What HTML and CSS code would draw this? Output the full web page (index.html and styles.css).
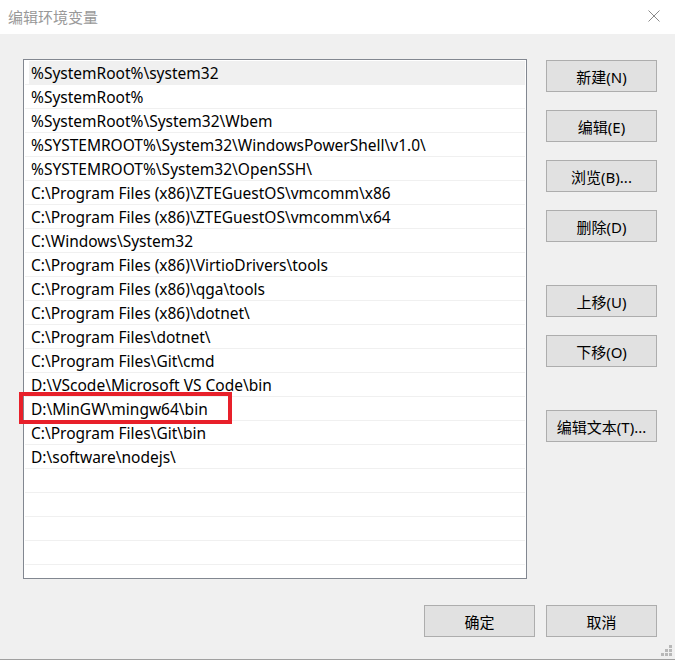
FILE: index.html
```html
<!DOCTYPE html>
<html lang="zh-CN">
<head>
    <meta charset="UTF-8">
    <title>编辑环境变量</title>
    <link rel="stylesheet" href="styles.css">
</head>
<body>

<div class="window">
    <div class="titlebar">
        <span class="title">编辑环境变量</span>
        <svg class="close" width="12" height="12" viewBox="0 0 12 12">
            <path d="M0.5 0.5 L11.5 11.5 M11.5 0.5 L0.5 11.5" stroke="#8a8a8a" stroke-width="1" fill="none"/>
        </svg>
    </div>

    <div class="main">
        <div class="list-wrap">
            <div class="list">
                <div class="row selected"><span>%SystemRoot%\system32</span></div>
                <div class="row"><span>%SystemRoot%</span></div>
                <div class="row"><span>%SystemRoot%\System32\Wbem</span></div>
                <div class="row"><span>%SYSTEMROOT%\System32\WindowsPowerShell\v1.0\</span></div>
                <div class="row"><span>%SYSTEMROOT%\System32\OpenSSH\</span></div>
                <div class="row"><span>C:\Program Files (x86)\ZTEGuestOS\vmcomm\x86</span></div>
                <div class="row"><span>C:\Program Files (x86)\ZTEGuestOS\vmcomm\x64</span></div>
                <div class="row"><span>C:\Windows\System32</span></div>
                <div class="row"><span>C:\Program Files (x86)\VirtioDrivers\tools</span></div>
                <div class="row"><span>C:\Program Files (x86)\qga\tools</span></div>
                <div class="row"><span>C:\Program Files (x86)\dotnet\</span></div>
                <div class="row"><span>C:\Program Files\dotnet\</span></div>
                <div class="row"><span>C:\Program Files\Git\cmd</span></div>
                <div class="row"><span>D:\VScode\Microsoft VS Code\bin</span></div>
                <div class="row"><span>D:\MinGW\mingw64\bin</span></div>
                <div class="row"><span>C:\Program Files\Git\bin</span></div>
                <div class="row"><span>D:\software\nodejs\</span></div>
                <div class="row"><span></span></div>
                <div class="row"><span></span></div>
                <div class="row"><span></span></div>
                <div class="row"><span></span></div>
                <div class="row"><span></span></div>
                <div class="row"><span></span></div>
            </div>
            <!-- red marker around the MinGW row -->
            <div class="mark"></div>
        </div>

        <div class="side">
            <button class="btn">新建(N)</button>
            <button class="btn">编辑(E)</button>
            <button class="btn">浏览(B)...</button>
            <button class="btn">删除(D)</button>
            <button class="btn gap">上移(U)</button>
            <button class="btn">下移(O)</button>
            <button class="btn gap">编辑文本(T)...</button>
        </div>
    </div>

    <div class="footer">
        <button class="btn">确定</button>
        <button class="btn">取消</button>
    </div>

    <svg class="grip" width="12" height="12" viewBox="0 0 12 12">
        <rect x="8" y="0" width="3" height="3" fill="#b8b8b8"/>
        <rect x="4" y="4" width="3" height="3" fill="#b8b8b8"/>
        <rect x="8" y="4" width="3" height="3" fill="#b8b8b8"/>
        <rect x="0" y="8" width="3" height="3" fill="#b8b8b8"/>
        <rect x="4" y="8" width="3" height="3" fill="#b8b8b8"/>
        <rect x="8" y="8" width="3" height="3" fill="#b8b8b8"/>
    </svg>
</div>

</body>
</html>
```

FILE: styles.css
```css
* {
    box-sizing: border-box;
}
body {
    margin: 0;
    font-family: "Noto Sans", "Noto Sans CJK SC", sans-serif;
    font-size: 15px;
    color: #000;
    background-color: #f0f0f0;
}
.window {
    position: relative;
    width: 675px;
    height: 660px;
    background-color: #f0f0f0;
    border-bottom: 1px solid #a0a0a0;
}
.titlebar {
    height: 34px;
    background-color: #ffffff;
    display: flex;
    align-items: center;
    justify-content: space-between;
    padding: 0 15px 2px 8px;
}
.title {
    color: #999999;
    font-size: 15px;
    font-family: "Noto Sans CJK SC", sans-serif;
}
.main {
    display: flex;
    padding: 25px 0 0 23px;
}
.list-wrap {
    position: relative;
}
.list {
    width: 504px;
    height: 520px;
    background-color: #ffffff;
    border: 1px solid #828790;
    padding: 1px 1px 0 1px;
    overflow: hidden;
}
.row {
    height: 24px;
    border-bottom: 1px solid #f0f0f0;
    padding-left: 4px;
}
.row span {
    display: block;
    height: 23px;
    line-height: 24px;
    padding-left: 2px;
    font-size: 15.5px;
    white-space: nowrap;
}
.row.selected span {
    background-color: #f0f0f0;
}
.mark {
    position: absolute;
    left: -4px;
    top: 333px;
    width: 213px;
    height: 32px;
    border: 4px solid #e8202a;
}
.side {
    display: flex;
    flex-direction: column;
    gap: 18px;
    margin-left: 19px;
    padding-top: 1px;
}
.side .gap {
    margin-top: 25px;
}
.btn {
    width: 111px;
    height: 32px;
    background-color: #e1e1e1;
    border: 1px solid #adadad;
    border-radius: 0;
    font-family: "Noto Sans", "Noto Sans CJK SC", sans-serif;
    font-size: 15px;
    color: #000;
    padding: 0;
}
.footer {
    display: flex;
    justify-content: flex-end;
    gap: 11px;
    padding-right: 18px;
    margin-top: 26px;
}
.grip {
    position: absolute;
    right: 2px;
    bottom: 2px;
}
```
